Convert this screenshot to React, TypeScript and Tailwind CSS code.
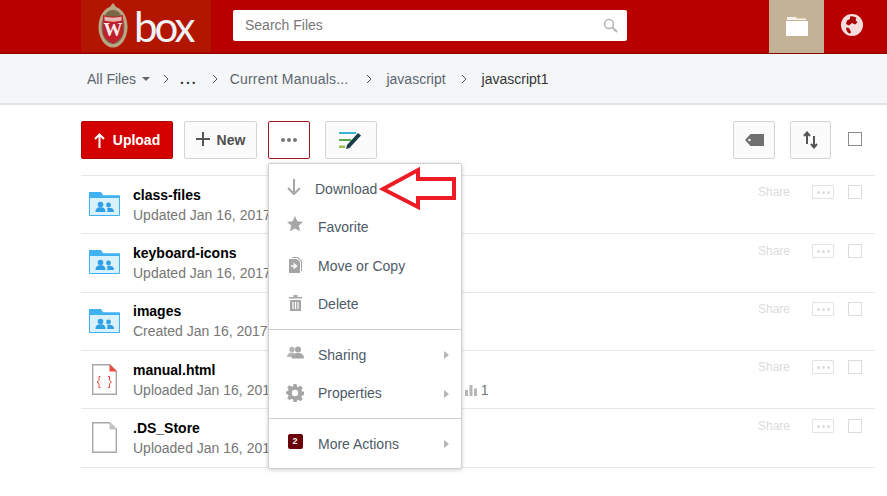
import React from "react";

const Chevron = () => (
  <svg width="6" height="10" viewBox="0 0 6 10" className="shrink-0">
    <path d="M1 1l4 4-4 4" fill="none" stroke="#555" strokeWidth="1" />
  </svg>
);

const SharedFolder = () => (
  <svg width="31" height="24" viewBox="0 0 31 24">
    <path d="M0.500 23.500V1h11l2 3H30.500v19.500z" fill="#d9f0fd" stroke="#3fb0f0" strokeWidth="1" />
    <path d="M0 0h12l2.300 3.500H31v2.500H0z" fill="#40b2f2" />
    <circle cx="11.500" cy="12.500" r="2.800" fill="#2f9fe6" />
    <path d="M6.500 20c0-3.500 2-4.800 5-4.800s5 1.300 5 4.800z" fill="#2f9fe6" />
    <circle cx="19.500" cy="13" r="2.400" fill="#2f9fe6" />
    <path d="M18 20h7c0-3-1.800-4.300-4.500-4.300-1 0-1.800.2-2.500.6 0 0 1 1.500 0 3.700z" fill="#2f9fe6" />
  </svg>
);

const FileIcon = ({ code }: { code?: boolean }) => (
  <svg width="25" height="31" viewBox="0 0 25 31">
    <path d="M.7.700h17l6.600 6.600V30.300H.7z" fill="#fff" stroke="#a8a8a8" strokeWidth="1.400" />
    <path d="M17.500 0L25 7.500h-7.500z" fill={code ? "#ee4b3e" : "#c4c4c4"} />
    {code && (
      <g fill="none" stroke="#e8473b" strokeWidth="1">
        <path d="M8.500 12.500H7v4l-2 1.500 2 1.500v4h1.500" />
        <path d="M16 12.500h1.500v4l2 1.500-2 1.500v4H16" />
      </g>
    )}
  </svg>
);

const rows = [
  { name: "class-files", sub: "Updated Jan 16, 2017", icon: <SharedFolder />, h: "h-[58px]", top: "pt-[11px]", right: "pt-[9px]" },
  { name: "keyboard-icons", sub: "Updated Jan 16, 2017", icon: <SharedFolder />, h: "h-[59px]", top: "pt-[11px]", right: "pt-[10px]" },
  { name: "images", sub: "Created Jan 16, 2017", icon: <SharedFolder />, h: "h-[58px]", top: "pt-[10px]", right: "pt-[9px]" },
  { name: "manual.html", sub: "Uploaded Jan 16, 2017", icon: <FileIcon code />, h: "h-[58px]", top: "pt-[11px]", right: "pt-[9px]", stat: true },
  { name: ".DS_Store", sub: "Uploaded Jan 16, 2017", icon: <FileIcon />, h: "h-[59px]", top: "pt-[11px]", right: "pt-[10px]" },
];

const MenuItem = ({
  icon,
  label,
  sub,
  narrow,
}: {
  icon: React.ReactNode;
  label: string;
  sub?: boolean;
  narrow?: boolean;
}) => (
  <div className="flex h-[38.5px] items-center text-[14px] text-[#4e5a66]">
    <div className={`flex shrink-0 items-center justify-center ${narrow ? "w-[45px] pl-[3px]" : "w-[48px] pl-[2px]"}`}>{icon}</div>
    <span className="flex-1">{label}</span>
    {sub && (
      <svg width="5" height="8" viewBox="0 0 5 8" className="mr-[12px]">
        <path d="M0 0l5 4-5 4z" fill="#b5b5b5" />
      </svg>
    )}
  </div>
);

const Btn = ({ className, children }: { className: string; children: React.ReactNode }) => (
  <div className={`flex h-[38px] items-center justify-center rounded-[2px] border border-[#d4d4d4] bg-[#fbfbfb] ${className}`}>
    {children}
  </div>
);

export default function App() {
  return (
    <div className="relative h-[496px] w-[887px] overflow-hidden bg-white font-['Liberation_Sans',Arial,sans-serif]">
      {/* header */}
      <header className="flex h-[54px] items-start border-b border-[#8d0000] bg-[#b80000] pl-[81px]">
        <div className="flex h-[52px] w-[130px] items-center gap-[6px] bg-[#b21500] pl-[17px]">
          <svg width="30" height="46" viewBox="0 0 30 46" className="shrink-0">
            <ellipse cx="15" cy="24" rx="14.500" ry="20.500" fill="#b9a684" />
            <path d="M15 0l4 5h-8z" fill="#b9a684" />
            <ellipse cx="15" cy="24" rx="11.500" ry="17" fill="#7a6644" />
            <path d="M5 12c5 2 15 2 20 0v17c0 6-6 9-10 12-4-3-10-6-10-12z" fill="#c0202c" />
            <path d="M6.500 13.500c5 1.500 12 1.500 17 0v4c-5 1.500-12 1.500-17 0z" fill="#e8b8b0" />
            <text x="15" y="33" textAnchor="middle" fontSize="19" fontWeight="700" fill="#f6ecec" fontFamily="Liberation Serif, serif">W</text>
          </svg>
          <span className="font-['Lato',sans-serif] text-[42px] leading-[50px] font-normal tracking-[-3px] text-[#eef3f8]">box</span>
        </div>
        <div className="mt-[10px] ml-[22px] flex h-[31px] w-[394px] items-center justify-between rounded-[2px] bg-white pr-[9px] pl-[12px] text-[14px] text-[#777]">
          <span>Search Files</span>
          <svg width="15" height="15" viewBox="0 0 15 15">
            <circle cx="6" cy="6" r="4.500" fill="none" stroke="#b5b5b5" strokeWidth="1.500" />
            <path d="M9.500 9.500l4.500 4.500" stroke="#b5b5b5" strokeWidth="2" />
          </svg>
        </div>
        <div className="ml-[142px] flex h-[53px] w-[55px] items-center justify-center bg-[#c4b297]">
          <svg width="22" height="19" viewBox="0 0 22 19">
            <path d="M1 0h9l1 1.500H20V3H1z" fill="#f7f3ec" />
            <rect y="4" width="22" height="15" fill="#fff" />
          </svg>
        </div>
        <div className="ml-[17px] flex h-[53px] w-[22px] items-center justify-center pb-[3px]">
          <svg width="22" height="22" viewBox="0 0 22 22">
            <circle cx="11" cy="11" r="11" fill="#f6dcdc" />
            <path d="M9 2.500c2-.6 5 0 6.500 1.500l-1 2 2 2.500-2.500 2-3-1.500-3 2.500-3-1.500 1-3.500 3-1.500zM5 13.500l3 .5 2 4-1 2c-2-1-4-3-4-6.500z" fill="#a80000" />
            <circle cx="11" cy="11" r="9.700" fill="none" stroke="#f6dcdc" strokeWidth="1.500" />
          </svg>
        </div>
      </header>

      {/* breadcrumbs */}
      <nav className="flex h-[51px] items-center border-b-2 border-[#e2e2e2] bg-[#f5f6f8] pt-[1px] pl-[87px] text-[14px] text-[#5b6670]">
        <span>All Files</span>
        <svg width="8" height="4" viewBox="0 0 8 4" className="mr-[13px] ml-[6px]">
          <path d="M0 0h8L4 4z" fill="#666" />
        </svg>
        <Chevron />
        <span className="mr-[14px] ml-[11px] font-bold tracking-[2px] text-[#333]">...</span>
        <Chevron />
        <span className="mr-[18px] ml-[12px] tracking-[0.2px]">Current Manuals...</span>
        <Chevron />
        <span className="mr-[15px] ml-[14px]">javascript</span>
        <Chevron />
        <span className="ml-[15px] text-[#333]">javascript1</span>
      </nav>

      {/* toolbar */}
      <div className="flex h-[70px] items-start pt-[16px] pr-[25px] pl-[81px]">
        <div className="flex h-[38px] w-[92px] items-center justify-center gap-[8px] rounded-[2px] border border-[#b00000] bg-[#d40000] text-[14px] font-bold text-white">
          <svg width="11" height="15" viewBox="0 0 11 15">
            <path d="M5.500 15V2M1 6l4.500-4.500L10 6" fill="none" stroke="#fff" strokeWidth="2" />
          </svg>
          Upload
        </div>
        <Btn className="ml-[11px] w-[73px] gap-[7px] text-[14px] font-bold text-[#4e4e4e]">
          <svg width="14" height="14" viewBox="0 0 14 14" className="mb-[2px]">
            <path d="M7 0v14M0 7h14" stroke="#555" strokeWidth="2" />
          </svg>
          New
        </Btn>
        <Btn className="ml-[11px] w-[42px] gap-[2px] !rounded-[2px] !border-[#a5161c] !bg-white">
          <i className="h-[4px] w-[4px] rounded-full bg-[#777]" />
          <i className="h-[4px] w-[4px] rounded-full bg-[#777]" />
          <i className="h-[4px] w-[4px] rounded-full bg-[#777]" />
        </Btn>
        <Btn className="ml-[15px] w-[52px]">
          <svg width="24" height="17" viewBox="0 0 24 17">
            <rect x="0" y="0" width="17" height="2" fill="#39b5d4" />
            <rect x="0" y="7" width="12" height="2" fill="#55a84c" />
            <rect x="0" y="13.500" width="6" height="2.500" fill="#9ac24a" />
            <path d="M7 17l1-4L19 1l3 2.500L10.500 16z" fill="#173e48" />
          </svg>
        </Btn>
        <Btn className="ml-auto w-[42px]">
          <svg width="19" height="12" viewBox="0 0 19 12">
            <path d="M5.500 0H19v12H5.500L0 6zM4.500 4.800a1.200 1.200 0 100 2.400 1.200 1.200 0 000-2.400z" fill="#6f6f6f" fillRule="evenodd" />
          </svg>
        </Btn>
        <Btn className="ml-[15px] w-[41px]">
          <svg width="15" height="18" viewBox="0 0 15 18">
            <path d="M4 13V2M1 5l3-3.500L7 5" fill="none" stroke="#555" strokeWidth="2" />
            <path d="M11 5v11M8 13l3 3.500L14 13" fill="none" stroke="#555" strokeWidth="2" />
          </svg>
        </Btn>
        <div className="mt-[11px] ml-[17px] h-[14px] w-[14px] border border-[#8c8c8c]" />
      </div>

      {/* rows */}
      <div className="mr-[12px] ml-[81px] border-b border-[#e8e8e8]">
        {rows.map((r) => (
          <div key={r.name} className={`flex items-start border-t border-[#e8e8e8] ${r.h}`}>
            <div className="mr-[5px] flex h-[56px] w-[47px] shrink-0 items-center justify-center">{r.icon}</div>
            <div className={`w-[332px] shrink-0 ${r.top}`}>
              <div className="text-[14px] leading-[16px] font-bold text-black">{r.name}</div>
              <div className="mt-[4px] flex items-center text-[14px] leading-[16px] whitespace-nowrap text-[#767676]">
                <span>{r.sub}</span>
                {r.stat && (
                  <span className="ml-[187px] flex items-center gap-[4px]">
                    <svg width="12" height="11" viewBox="0 0 12 11">
                      <path d="M0 5h3v6H0zM4.500 0h3v11h-3zM9 3.500h3V11H9z" fill="#b5b5b5" />
                    </svg>
                    1
                  </span>
                )}
              </div>
            </div>
            <div className={`flex flex-1 items-center justify-end pr-[13px] ${r.right}`}>
              <span className="text-[12px] leading-[14px] text-[#dcdcdc]">Share</span>
              <div className="ml-[22px] flex h-[14px] w-[22px] items-center justify-center gap-[2px] rounded-[1px] border border-[#e2e2e2]">
                <i className="h-[3px] w-[3px] rounded-full bg-[#dcdcdc]" />
                <i className="h-[3px] w-[3px] rounded-full bg-[#dcdcdc]" />
                <i className="h-[3px] w-[3px] rounded-full bg-[#dcdcdc]" />
              </div>
              <div className="ml-[14px] h-[14px] w-[14px] border border-[#dcdcdc]" />
            </div>
          </div>
        ))}
      </div>

      {/* dropdown menu */}
      <div className="absolute top-[163px] left-[268px] h-[306px] w-[194px] rounded-[2px] border border-[#cfcfcf] bg-white py-[6px] pl-[1px] shadow-[0_1px_4px_rgba(0,0,0,0.2)]">
        <MenuItem
          narrow
          label="Download"
          icon={
            <svg width="14" height="16" viewBox="0 0 14 16" className="mb-[5px]">
              <path d="M7 0v14.500M1 9l6 6 6-6" fill="none" stroke="#a6a6a6" strokeWidth="2" />
            </svg>
          }
        />
        <MenuItem
          label="Favorite"
          icon={
            <svg width="16" height="16" viewBox="0 0 16 16" className="mb-[8px]">
              <path d="M8 0l2.400 5.300 5.600.6-4.200 3.700 1.200 5.700L8 12.400l-5 2.900 1.200-5.700L0 5.900l5.600-.6z" fill="#a6a6a6" />
            </svg>
          }
        />
        <MenuItem
          label="Move or Copy"
          icon={
            <svg width="13" height="16" viewBox="0 0 13 16" className="mb-[3px]">
              <path d="M0 2h8l3 3v11H0z" fill="#a6a6a6" />
              <path d="M3 0h6l4 4v10h-1V4.500L8.500 1H3z" fill="#a6a6a6" />
              <path d="M2 9h4M4.500 6.500L7.500 9l-3 2.500" fill="none" stroke="#fff" strokeWidth="1.500" />
            </svg>
          }
        />
        <MenuItem
          label="Delete"
          icon={
            <svg width="13" height="16" viewBox="0 0 13 16" className="mb-[3px]">
              <path d="M0 2h4.500V0h4v2H13v1.500H0zM1 5h11v11H1z" fill="#a6a6a6" />
              <path d="M4 7v7M6.500 7v7M9 7v7" stroke="#fff" strokeWidth="1.200" />
            </svg>
          }
        />
        <div className="-ml-[1px] mt-[5px] mb-[6px] border-t border-[#cfcfcf]" />
        <MenuItem
          sub
          label="Sharing"
          icon={
            <svg width="17" height="13" viewBox="0 0 17 13" className="mb-[5px]">
              <circle cx="5" cy="3.500" r="2.700" fill="#b5b5b5" />
              <path d="M0 11c0-3 2-4.500 5-4.500 1 0 2 .2 2.500.6L5 11z" fill="#b5b5b5" />
              <circle cx="11" cy="3.500" r="3" fill="#a6a6a6" />
              <path d="M4.500 12.500c0-3.800 2.800-5.500 6.500-5.500s6 1.700 6 5.500z" fill="#a6a6a6" />
            </svg>
          }
        />
        <MenuItem
          sub
          label="Properties"
          icon={
            <svg width="18" height="18" viewBox="0 0 18 18" className="mb-[2px]">
              <path
                d="M7.400 0h3.200l.4 2.400 1.500.6 2-1.400 2.300 2.300-1.400 2 .6 1.500 2 .4v3.200l-2 .4-.6 1.500 1.400 2-2.300 2.300-2-1.400-1.500.6-.4 2H7.400L7 15.400l-1.500-.6-2 1.400-2.300-2.300 1.400-2-.6-1.500-2-.4V7.400l2-.4.6-1.500-1.400-2 2.300-2.300 2 1.400L7 2.400zM9 5.800a3.200 3.200 0 100 6.400 3.200 3.200 0 000-6.400z"
                fill="#a6a6a6"
                fillRule="evenodd"
              />
            </svg>
          }
        />
        <div className="-ml-[1px] mt-[5px] mb-[6px] border-t border-[#cfcfcf]" />
        <MenuItem
          sub
          label="More Actions"
          icon={
            <span className="mb-[6px] flex h-[15px] w-[15px] items-center justify-center rounded-[2px] bg-[#6a0008] text-[9px] leading-none font-bold text-white">
              2
            </span>
          }
        />
      </div>

      {/* annotation arrow */}
      <svg width="90" height="50" viewBox="0 0 90 50" className="absolute top-[165px] left-[375px]">
        <path d="M8 24 L43 5 L43 14 L79 14 L79 33 L43 33 L43 42 Z" fill="none" stroke="#ed1c24" strokeWidth="4" />
      </svg>
    </div>
  );
}
